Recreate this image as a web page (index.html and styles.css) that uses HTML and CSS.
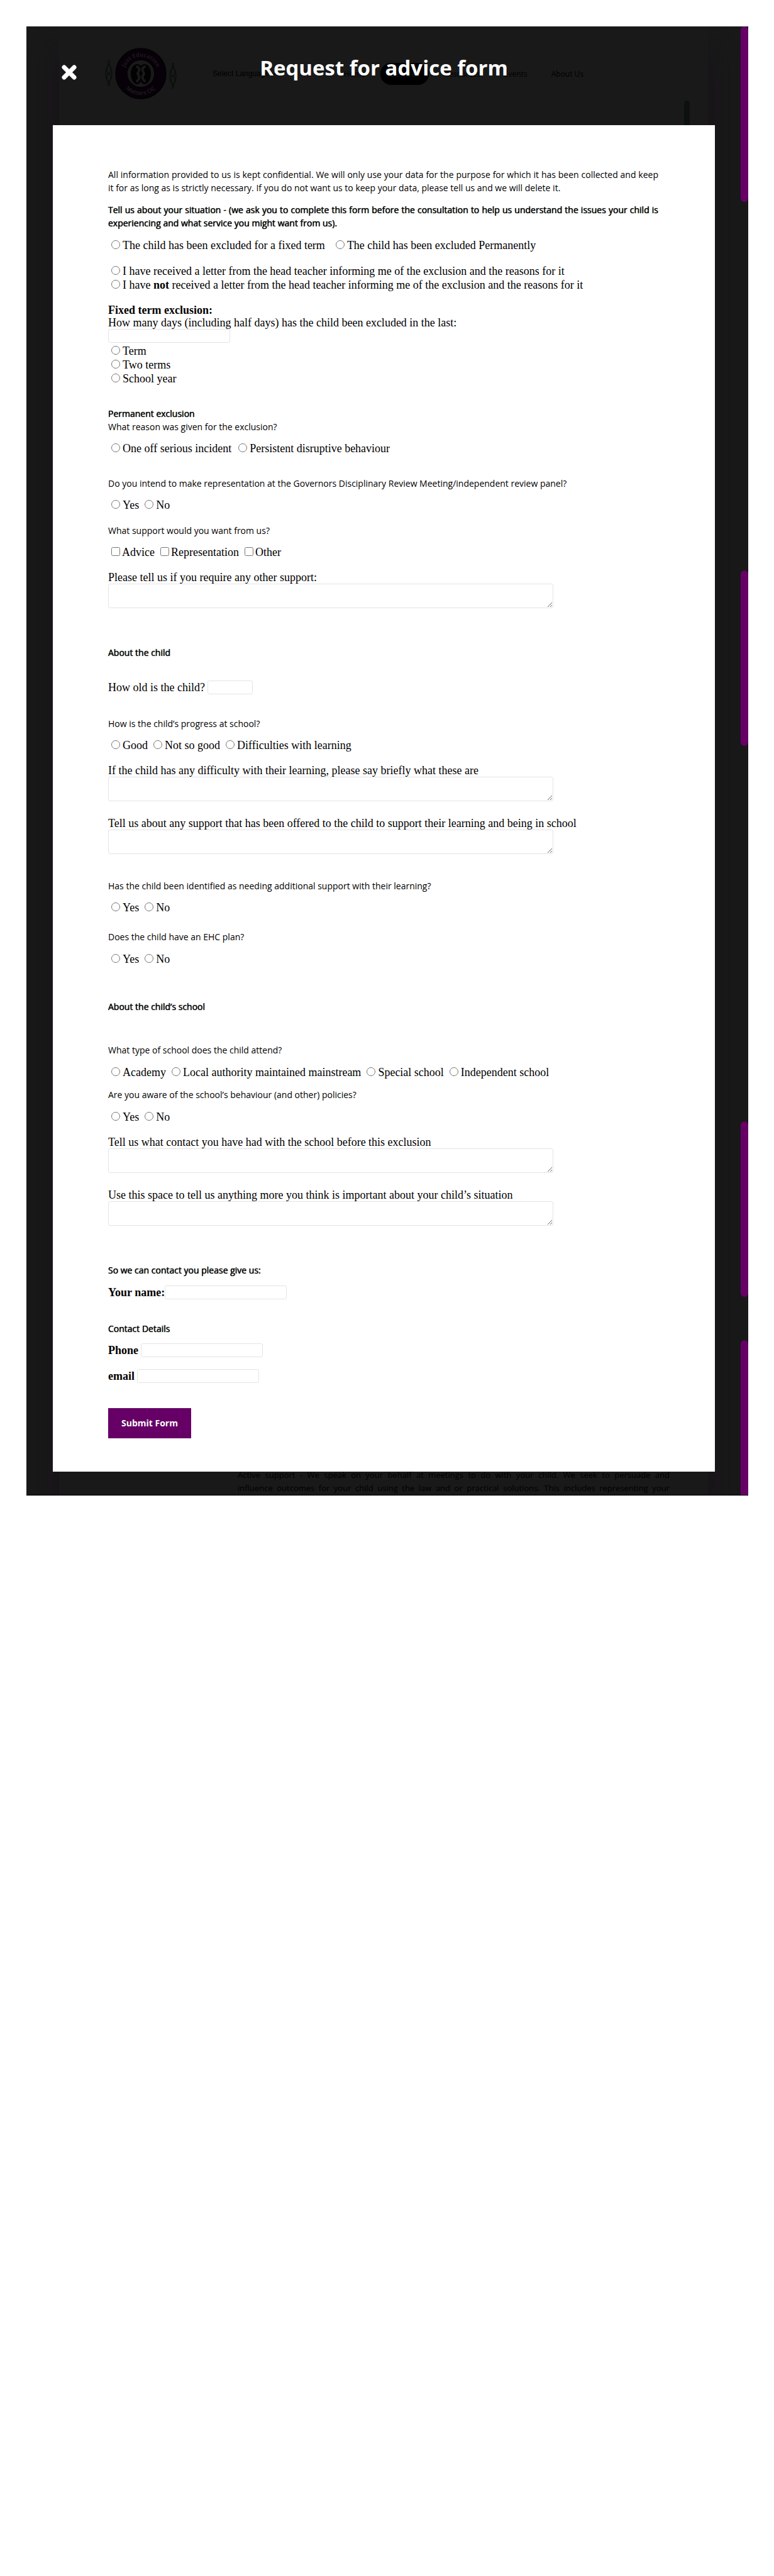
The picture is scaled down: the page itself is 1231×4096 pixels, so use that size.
FILE: index.html
```html
<!DOCTYPE html>
<html lang="en">
<head>
<meta charset="utf-8">
<title>Request for advice form</title>
<link rel="stylesheet" href="styles.css">
</head>
<body>
<div class="screen">
  <div class="backdrop" aria-hidden="true">
    <div class="sheet">
      <div class="site-header">
        <svg class="logo" viewBox="0 0 116 84" width="116" height="84">
          <g fill="none" stroke="#060b0a" stroke-width="1">
            <path d="M6 21v8M8 21v8M6 54v8M8 54v8"/>
            <ellipse cx="7" cy="42" rx="5" ry="13"/>
            <ellipse cx="7" cy="36" rx="3" ry="7"/><ellipse cx="7" cy="48" rx="3" ry="7"/>
            <path d="M108 25v8M110 25v8M108 58v8M110 58v8"/>
            <ellipse cx="109" cy="46" rx="5" ry="13"/>
            <ellipse cx="109" cy="40" rx="3" ry="7"/><ellipse cx="109" cy="52" rx="3" ry="7"/>
          </g>
          <circle cx="58" cy="42" r="40" fill="#080009" stroke="#020202" stroke-width="1.500"/>
          <circle cx="58" cy="42" r="22" fill="#191919" stroke="#020202" stroke-width="1.500"/>
          <path d="M58 30c-4-6-16-4-16 12s12 22 16 12c4 10 16 4 16-12s-12-18-16-12z" fill="#020202"/>
          <path d="M52 31c6 3 3 7 1 11 3 4 4 8-1 12M64 31c-6 3-3 7-1 11-3 4-4 8 1 12" fill="none" stroke="#191919" stroke-width="4" stroke-linecap="round"/>
          <path id="arc-top" d="M31 42a27 27 0 0 1 54 0" fill="none"/>
          <path id="arc-bottom" d="M24 42a34 34 0 0 0 68 0" fill="none"/>
          <text class="logo-text"><textPath href="#arc-top" startOffset="50%" text-anchor="middle">Just Education</textPath></text>
          <text class="logo-text"><textPath href="#arc-bottom" startOffset="50%" text-anchor="middle">Matters CIC</textPath></text>
        </svg>
        <span class="language">Select Language
          <svg viewBox="0 0 8 6" width="8" height="6"><path d="M1 1l3 3 3-3" fill="none" stroke="#000" stroke-width="2"/></svg>
        </span>
        <div class="nav">
          <span>Home</span>
          <span class="nav-current">Services</span>
          <span>Resources</span>
          <span>Events</span>
          <span>About Us</span>
        </div>
      </div>
      <p class="excerpt">Active support - We speak on your behalf at meetings to do with your child. We seek to persuade and<br>influence outcomes for your child using the law and or practical solutions. This includes representing your</p>
    </div>
    <div class="inner-scroll"></div>
    <div class="rail">
      <i class="rail-bar rail-bar-1"></i>
      <i class="rail-bar rail-bar-2"></i>
      <i class="rail-bar rail-bar-3"></i>
      <i class="rail-bar rail-bar-4"></i>
    </div>
  </div>

  <main class="dialog">
    <header class="dialog-header">
      <button class="close" type="button" aria-label="Close">
        <svg viewBox="0 0 24 24" width="24" height="24"><path d="M4 4l16 16M20 4L4 20" stroke="#fff" stroke-width="7" stroke-linecap="round"/></svg>
      </button>
      <h1>Request for advice form</h1>
    </header>

    <form class="card">
      <p class="text">All information provided to us is kept confidential. We will only use your data for the purpose for which it has been collected and keep it for as long as is strictly necessary. If you do not want us to keep your data, please tell us and we will delete it.</p>
      <p class="text strong gap-14">Tell us about your situation - (we ask you to complete this form before the consultation to help us understand the issues your child is experiencing and what service you might want from us).</p>

      <div class="options wide gap-14">
        <label><input type="radio" name="kind">The child has been excluded for a fixed term</label>
        <label><input type="radio" name="kind">The child has been excluded Permanently</label>
      </div>
      <div class="options stacked gap-19">
        <label><input type="radio" name="letter">I have received a letter from the head teacher informing me of the exclusion and the reasons for it</label>
        <label><input type="radio" name="letter"><span>I have <b>not</b> received a letter from the head teacher informing me of the exclusion and the reasons for it</span></label>
      </div>

      <label class="field gap-19" for="days"><b>Fixed term exclusion:</b><br>How many days (including half days) has the child been excluded in the last:</label>
      <input class="box" id="days" type="text">
      <div class="options stacked gap-2">
        <label><input type="radio" name="period">Term</label>
        <label><input type="radio" name="period">Two terms</label>
        <label><input type="radio" name="period">School year</label>
      </div>

      <h2 class="text strong gap-34">Permanent exclusion</h2>
      <p class="text">What reason was given for the exclusion?</p>
      <div class="options medium gap-13">
        <label><input type="radio" name="reason">One off serious incident</label>
        <label><input type="radio" name="reason">Persistent disruptive behaviour</label>
      </div>

      <p class="text gap-34">Do you intend to make representation at the Governors Disciplinary Review Meeting/independent review panel?</p>
      <div class="options gap-13">
        <label><input type="radio" name="represent">Yes</label>
        <label><input type="radio" name="represent">No</label>
      </div>

      <p class="text gap-19">What support would you want from us?</p>
      <div class="options checks gap-13">
        <label><input type="checkbox">Advice</label>
        <label><input type="checkbox">Representation</label>
        <label><input type="checkbox">Other</label>
      </div>
      <label class="field gap-19" for="support">Please tell us if you require any other support:</label>
      <textarea id="support"></textarea>

      <h2 class="text strong gap-60">About the child</h2>
      <div class="inline gap-34">
        <label for="age">How old is the child?</label>
        <input class="box box-short" id="age" type="text">
      </div>
      <p class="text gap-36">How is the child’s progress at school?</p>
      <div class="options gap-13">
        <label><input type="radio" name="progress">Good</label>
        <label><input type="radio" name="progress">Not so good</label>
        <label><input type="radio" name="progress">Difficulties with learning</label>
      </div>
      <label class="field gap-19" for="difficulty">If the child has any difficulty with their learning, please say briefly what these are</label>
      <textarea id="difficulty"></textarea>
      <label class="field gap-25" for="offered">Tell us about any support that has been offered to the child to support their learning and being in school</label>
      <textarea id="offered"></textarea>

      <p class="text gap-40">Has the child been identified as needing additional support with their learning?</p>
      <div class="options gap-13">
        <label><input type="radio" name="additional">Yes</label>
        <label><input type="radio" name="additional">No</label>
      </div>
      <p class="text gap-25">Does the child have an EHC plan?</p>
      <div class="options gap-14">
        <label><input type="radio" name="ehc">Yes</label>
        <label><input type="radio" name="ehc">No</label>
      </div>

      <h2 class="text strong gap-54">About the child’s school</h2>
      <p class="text gap-48">What type of school does the child attend?</p>
      <div class="options gap-14">
        <label><input type="radio" name="school">Academy</label>
        <label><input type="radio" name="school">Local authority maintained mainstream</label>
        <label><input type="radio" name="school">Special school</label>
        <label><input type="radio" name="school">Independent school</label>
      </div>
      <p class="text gap-14">Are you aware of the school’s behaviour (and other) policies?</p>
      <div class="options gap-14">
        <label><input type="radio" name="policies">Yes</label>
        <label><input type="radio" name="policies">No</label>
      </div>
      <label class="field gap-19" for="contacted">Tell us what contact you have had with the school before this exclusion</label>
      <textarea id="contacted"></textarea>
      <label class="field gap-25" for="more">Use this space to tell us anything more you think is important about your child’s situation</label>
      <textarea id="more"></textarea>

      <h2 class="text strong gap-60">So we can contact you please give us:</h2>
      <div class="inline tight gap-14">
        <label for="name"><b>Your name:</b></label>
        <input class="box" id="name" type="text">
      </div>
      <h2 class="text strong gap-36">Contact Details</h2>
      <div class="inline gap-13">
        <label for="phone"><b>Phone</b></label>
        <input class="box" id="phone" type="tel">
      </div>
      <div class="inline gap-19">
        <label for="email"><b>email</b></label>
        <input class="box" id="email" type="email">
      </div>
      <button class="submit gap-40" type="submit">Submit Form</button>
    </form>
  </main>
</div>
</body>
</html>
```

FILE: styles.css
```css
* {
  box-sizing: border-box;
}

body {
  margin: 0;
  padding: 42px 41px 0 42px;
  background: #fff;
  color: #000;
  font-family: "Liberation Serif", "Times New Roman", serif;
  font-size: 18px;
}

h1, h2, p {
  margin: 0;
}

.screen {
  position: relative;
  background: #191919;
}

/* dimmed page behind the dialog */
.backdrop {
  position: absolute;
  inset: 0;
  overflow: hidden;
  border-bottom: 1px solid #000;
  color: #000;
  font-family: "Open Sans", "Noto Sans", sans-serif;
  font-size: 12px;
}

.sheet {
  display: flex;
  flex-direction: column;
  justify-content: space-between;
  height: 100%;
  margin: 0 64px 0 52px;
  padding: 0 61px 0 72px;
  box-shadow: 0 40px 40px #17111a;
}

.site-header {
  display: flex;
  align-items: center;
  height: 150px;
}

.logo {
  flex: none;
}

.logo-text {
  fill: #191919;
  font-size: 9px;
  font-weight: 700;
}

.language {
  width: 110px;
  margin-left: 56px;
  white-space: nowrap;
  font-family: "Liberation Sans", Arial, sans-serif;
}

.nav {
  display: flex;
  align-items: center;
  gap: 24px;
  margin-left: 99px;
}

.nav span:nth-child(n+4) {
  margin-left: 14px;
}

.nav .nav-current {
  padding: 9px 16px;
  border-radius: 17px;
  background: #000;
  color: #191919;
}

.excerpt {
  margin-left: 212px;
  font-size: 13px;
  line-height: 21px;
  text-align: justify;
  text-align-last: justify;
}

.inner-scroll {
  position: absolute;
  top: 118px;
  right: 93px;
  width: 9px;
  height: 60px;
  border-radius: 5px;
  background: #0c1110;
}

.rail {
  position: absolute;
  inset: 0 0 0 auto;
  width: 12px;
}

.rail-bar {
  display: block;
  height: 279px;
  border-radius: 6px;
  background: #660066;
}

.rail-bar-2 {
  margin-top: 586px;
}

.rail-bar-3 {
  margin-top: 597px;
}

.rail-bar-4 {
  margin-top: 69px;
}

/* dialog */
.dialog {
  position: relative;
  padding: 0 53px 38px 42px;
}

.dialog-header {
  display: grid;
  grid-template-columns: 50px 1fr 50px;
  align-items: center;
  height: 157px;
  padding-bottom: 12px;
}

.close {
  display: flex;
  padding: 0 0 0 14px;
  border: 0;
  background: none;
}

h1 {
  padding-bottom: 14px;
  color: #fff;
  font-family: "Open Sans", "Noto Sans", sans-serif;
  font-size: 33px;
  line-height: 40px;
  text-align: center;
}

.card {
  padding: 68px 90px 53px 88px;
  background: #fff;
}

.text {
  font-family: "Open Sans", "Noto Sans", sans-serif;
  font-size: 14px;
  font-weight: 400;
  line-height: 21px;
  text-align: justify;
}

.strong {
  font-weight: 500;
  text-shadow: 0 0 1px #000;
}

.field {
  display: block;
  line-height: 20px;
}

.options {
  display: flex;
  gap: 4px;
  line-height: 22px;
}

.options label {
  display: flex;
  align-items: baseline;
}

.options input {
  width: 14px;
  height: 14px;
  margin: 0 4px 0 5px;
}

.checks input {
  margin-right: 3px;
}

.medium {
  gap: 6px;
}

.wide {
  gap: 12px;
}

.stacked {
  flex-direction: column;
  gap: 0;
}

.inline {
  display: flex;
  align-items: center;
  gap: 4px;
  height: 22px;
}

.tight {
  gap: 0;
}

.box,
textarea {
  display: block;
  margin: 0;
  border: 1px solid #e4e4e4;
  border-radius: 3px;
  background: #fff;
  font: inherit;
}

.box {
  width: 194px;
  height: 22px;
}

.box-short {
  width: 72px;
}

textarea {
  width: 708px;
  max-width: 100%;
  height: 39px;
}

.submit {
  display: block;
  padding: 14px 21px;
  border: 0;
  background: #660066;
  color: #fff;
  font-family: "Open Sans", "Noto Sans", sans-serif;
  font-size: 14px;
  font-weight: 700;
  line-height: 20px;
}

/* vertical rhythm */
.gap-2 { margin-top: 2px; }
.gap-13 { margin-top: 13px; }
.gap-14 { margin-top: 14px; }
.gap-19 { margin-top: 19px; }
.gap-25 { margin-top: 25px; }
.gap-34 { margin-top: 34px; }
.gap-36 { margin-top: 36px; }
.gap-40 { margin-top: 40px; }
.gap-48 { margin-top: 48px; }
.gap-54 { margin-top: 54px; }
.gap-60 { margin-top: 60px; }
```
